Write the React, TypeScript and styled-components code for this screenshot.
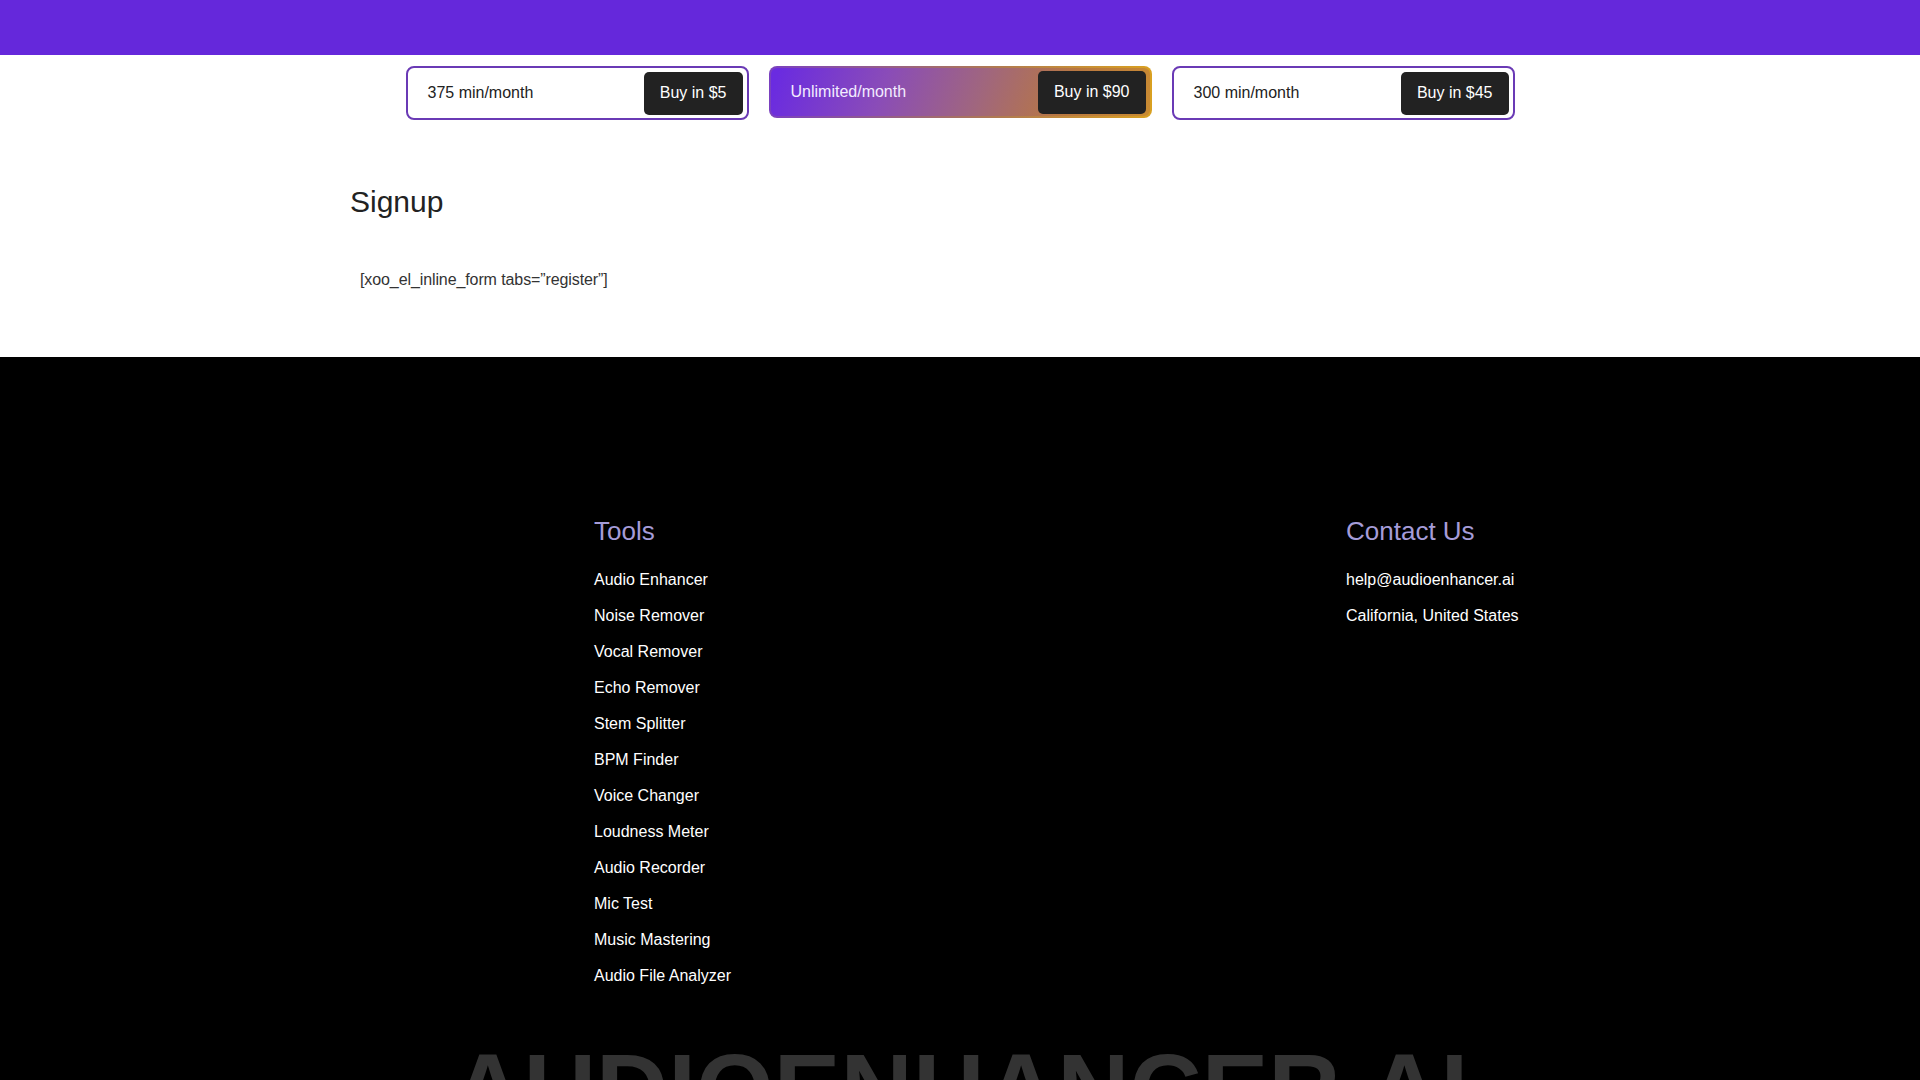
import React from 'react';
import styled, { createGlobalStyle } from 'styled-components';

const GlobalStyle = createGlobalStyle`
  html, body {
    margin: 0;
    padding: 0;
    background: #fff;
    font-family: "Liberation Sans", Arial, sans-serif;
  }
  * { box-sizing: border-box; }
`;

const TopBar = styled.div`
  height: 55px;
  background-color: #6528db;
`;

const PlansRow = styled.div`
  display: flex;
  justify-content: center;
  gap: 20px;
  padding-top: 11px;
`;

const PlanCard = styled.div<{ $featured?: boolean }>`
  display: flex;
  align-items: center;
  justify-content: space-between;
  width: ${(p) => (p.$featured ? '383px' : '343px')};
  height: ${(p) => (p.$featured ? '52px' : '54px')};
  padding: 0 4px 0 20px;
  border: 2px solid ${(p) => (p.$featured ? 'transparent' : '#6a3ab5')};
  border-radius: 8px;
  font-size: 16px;
  color: ${(p) => (p.$featured ? '#f3ecff' : '#222')};
  background: ${(p) =>
    p.$featured
      ? `linear-gradient(110deg, #6a2be0 2%, #8a4cb8 30%, #a0667e 55%, #b9783f 78%, #c98b32 100%) padding-box,
         linear-gradient(90deg, #7a40c0, #b07a50 60%, #d9a020) border-box`
      : '#fff'};
`;

const BuyButton = styled.button`
  height: 43px;
  padding: 0 16px;
  border: none;
  border-radius: 5px;
  background-color: #222222;
  color: #fff;
  font-family: inherit;
  font-size: 16px;
  cursor: pointer;
`;

const SignupSection = styled.section`
  width: 1220px;
  margin: 0 auto;
  padding: 64px 0 67px;
`;

const SignupTitle = styled.h2`
  margin: 0 0 50px;
  font-size: 30px;
  font-weight: 400;
  line-height: 36px;
  color: #222;
`;

const Shortcode = styled.p`
  margin: 0;
  padding-left: 10px;
  font-size: 16px;
  line-height: 20px;
  letter-spacing: -0.1px;
  color: #333;
`;

const Footer = styled.footer`
  background-color: #000;
  padding-top: 159px;
  height: 800px;
  overflow: hidden;
`;

const FooterColumns = styled.div`
  display: grid;
  grid-template-columns: 752px max-content;
  width: 1110px;
  margin: 0 auto;
  padding-left: 189px;
`;

const ColumnTitle = styled.h3`
  margin: 0 0 15px;
  font-size: 26px;
  font-weight: 400;
  line-height: 31px;
  color: #a59cd8;
`;

const LinkList = styled.ul`
  list-style: none;
  margin: 0;
  padding: 0;
`;

const LinkItem = styled.li`
  font-size: 16px;
  line-height: 36px;
  color: #fff;
  white-space: nowrap;
`;

const BrandMark = styled.div`
  margin-top: 45px;
  text-align: center;
  font-size: 100px;
  font-weight: 700;
  line-height: 100px;
  color: #333;
  white-space: nowrap;
`;

const plans = [
  { label: '375 min/month', price: '$5' },
  { label: 'Unlimited/month', price: '$90', featured: true },
  { label: '300 min/month', price: '$45' },
];

const tools = [
  'Audio Enhancer',
  'Noise Remover',
  'Vocal Remover',
  'Echo Remover',
  'Stem Splitter',
  'BPM Finder',
  'Voice Changer',
  'Loudness Meter',
  'Audio Recorder',
  'Mic Test',
  'Music Mastering',
  'Audio File Analyzer',
];

export default function App() {
  return (
    <>
      <GlobalStyle />
      <TopBar />
      <PlansRow>
        {plans.map((plan) => (
          <PlanCard key={plan.label} $featured={plan.featured}>
            <span>{plan.label}</span>
            <BuyButton>Buy in {plan.price}</BuyButton>
          </PlanCard>
        ))}
      </PlansRow>

      <SignupSection>
        <SignupTitle>Signup</SignupTitle>
        <Shortcode>[xoo_el_inline_form tabs=”register”]</Shortcode>
      </SignupSection>

      <Footer>
        <FooterColumns>
          <div>
            <ColumnTitle>Tools</ColumnTitle>
            <LinkList>
              {tools.map((t) => (
                <LinkItem key={t}>{t}</LinkItem>
              ))}
            </LinkList>
          </div>
          <div>
            <ColumnTitle>Contact Us</ColumnTitle>
            <LinkList>
              <LinkItem>help@audioenhancer.ai</LinkItem>
              <LinkItem>California, United States</LinkItem>
            </LinkList>
          </div>
        </FooterColumns>
        <BrandMark>AUDIOENHANCER.AI</BrandMark>
      </Footer>
    </>
  );
}
